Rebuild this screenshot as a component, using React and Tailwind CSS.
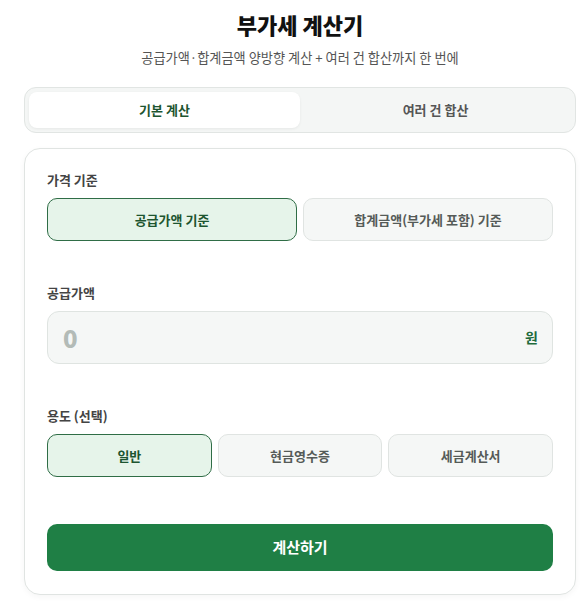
import { useState } from "react";

const font = { fontFamily: '"Noto Sans CJK KR", "Noto Sans", sans-serif' };

export default function App() {
  const [tab, setTab] = useState("basic");
  const [basis, setBasis] = useState("supply");
  const [usage, setUsage] = useState("general");
  const [amount, setAmount] = useState("");

  const choice = (active) =>
    active
      ? "border-[#2f6d46] bg-[#e6f4ea] text-[#1d5530]"
      : "border-[#e0e4e2] bg-[#f5f7f6] text-[#555b58]";

  return (
    <div className="min-h-screen bg-white" style={font}>
      <div className="ml-6 w-[552px] pt-[9px]">
        <h1 className="text-center text-[22px] leading-[30px] font-black text-[#111]">부가세 계산기</h1>
        <p className="mt-[10px] text-center text-[13.2px] leading-[18px] text-[#555]">
          공급가액·합계금액 양방향 계산 + 여러 건 합산까지 한 번에
        </p>

        <div className="mt-[20px] flex h-[46px] rounded-[12px] border border-[#e1e5e3] bg-[#f4f6f5] p-1">
          <button
            onClick={() => setTab("basic")}
            className={`flex-1 rounded-[8px] text-[13px] font-bold ${tab === "basic" ? "bg-white text-[#1d5530] shadow-[0_1px_3px_rgba(0,0,0,0.06)]" : "text-[#555]"}`}
          >
            기본 계산
          </button>
          <button
            onClick={() => setTab("multi")}
            className={`flex-1 rounded-[8px] text-[13px] font-bold ${tab === "multi" ? "bg-white text-[#1d5530] shadow-[0_1px_3px_rgba(0,0,0,0.06)]" : "text-[#555]"}`}
          >
            여러 건 합산
          </button>
        </div>

        <div className="mt-[15px] rounded-[16px] border border-[#e0e4e2] bg-white px-[22px] pt-[22px] pb-[23px] shadow-[0_2px_6px_rgba(0,0,0,0.04)]">
          <div className="text-[13px] leading-[18px] font-semibold text-[#444]">가격 기준</div>
          <div className="mt-[9px] flex gap-[6px]">
            <button
              onClick={() => setBasis("supply")}
              className={`h-[43px] flex-1 rounded-[10px] border text-[13px] font-bold ${choice(basis === "supply")}`}
            >
              공급가액 기준
            </button>
            <button
              onClick={() => setBasis("total")}
              className={`h-[43px] flex-1 rounded-[10px] border text-[13px] font-bold ${choice(basis === "total")}`}
            >
              합계금액(부가세 포함) 기준
            </button>
          </div>

          <div className="mt-[43px] text-[13px] leading-[18px] font-semibold text-[#444]">공급가액</div>
          <div className="mt-[9px] flex h-[53px] items-center rounded-[12px] border border-[#dfe4e1] bg-[#f5f7f6] pr-[14px] pl-[15px]">
            <input
              value={amount}
              onChange={(e) => setAmount(e.target.value)}
              placeholder="0"
              className="min-w-0 flex-1 bg-transparent text-[24px] font-extrabold text-[#222] outline-none placeholder:text-[#b3bbb7]"
              style={font}
            />
            <span className="text-[14px] font-bold text-[#1f6b3d]">원</span>
          </div>

          <div className="mt-[43px] text-[13px] leading-[18px] font-semibold text-[#444]">용도 (선택)</div>
          <div className="mt-[9px] flex gap-[6px]">
            {[
              ["general", "일반"],
              ["cash", "현금영수증"],
              ["tax", "세금계산서"],
            ].map(([key, label]) => (
              <button
                key={key}
                onClick={() => setUsage(key)}
                className={`h-[43px] flex-1 rounded-[10px] border text-[13px] font-bold ${choice(usage === key)}`}
              >
                {label}
              </button>
            ))}
          </div>

          <button className="mt-[47px] h-[47px] w-full rounded-[10px] bg-[#1f7f45] text-[15px] font-bold text-white">
            계산하기
          </button>
        </div>
      </div>
    </div>
  );
}
